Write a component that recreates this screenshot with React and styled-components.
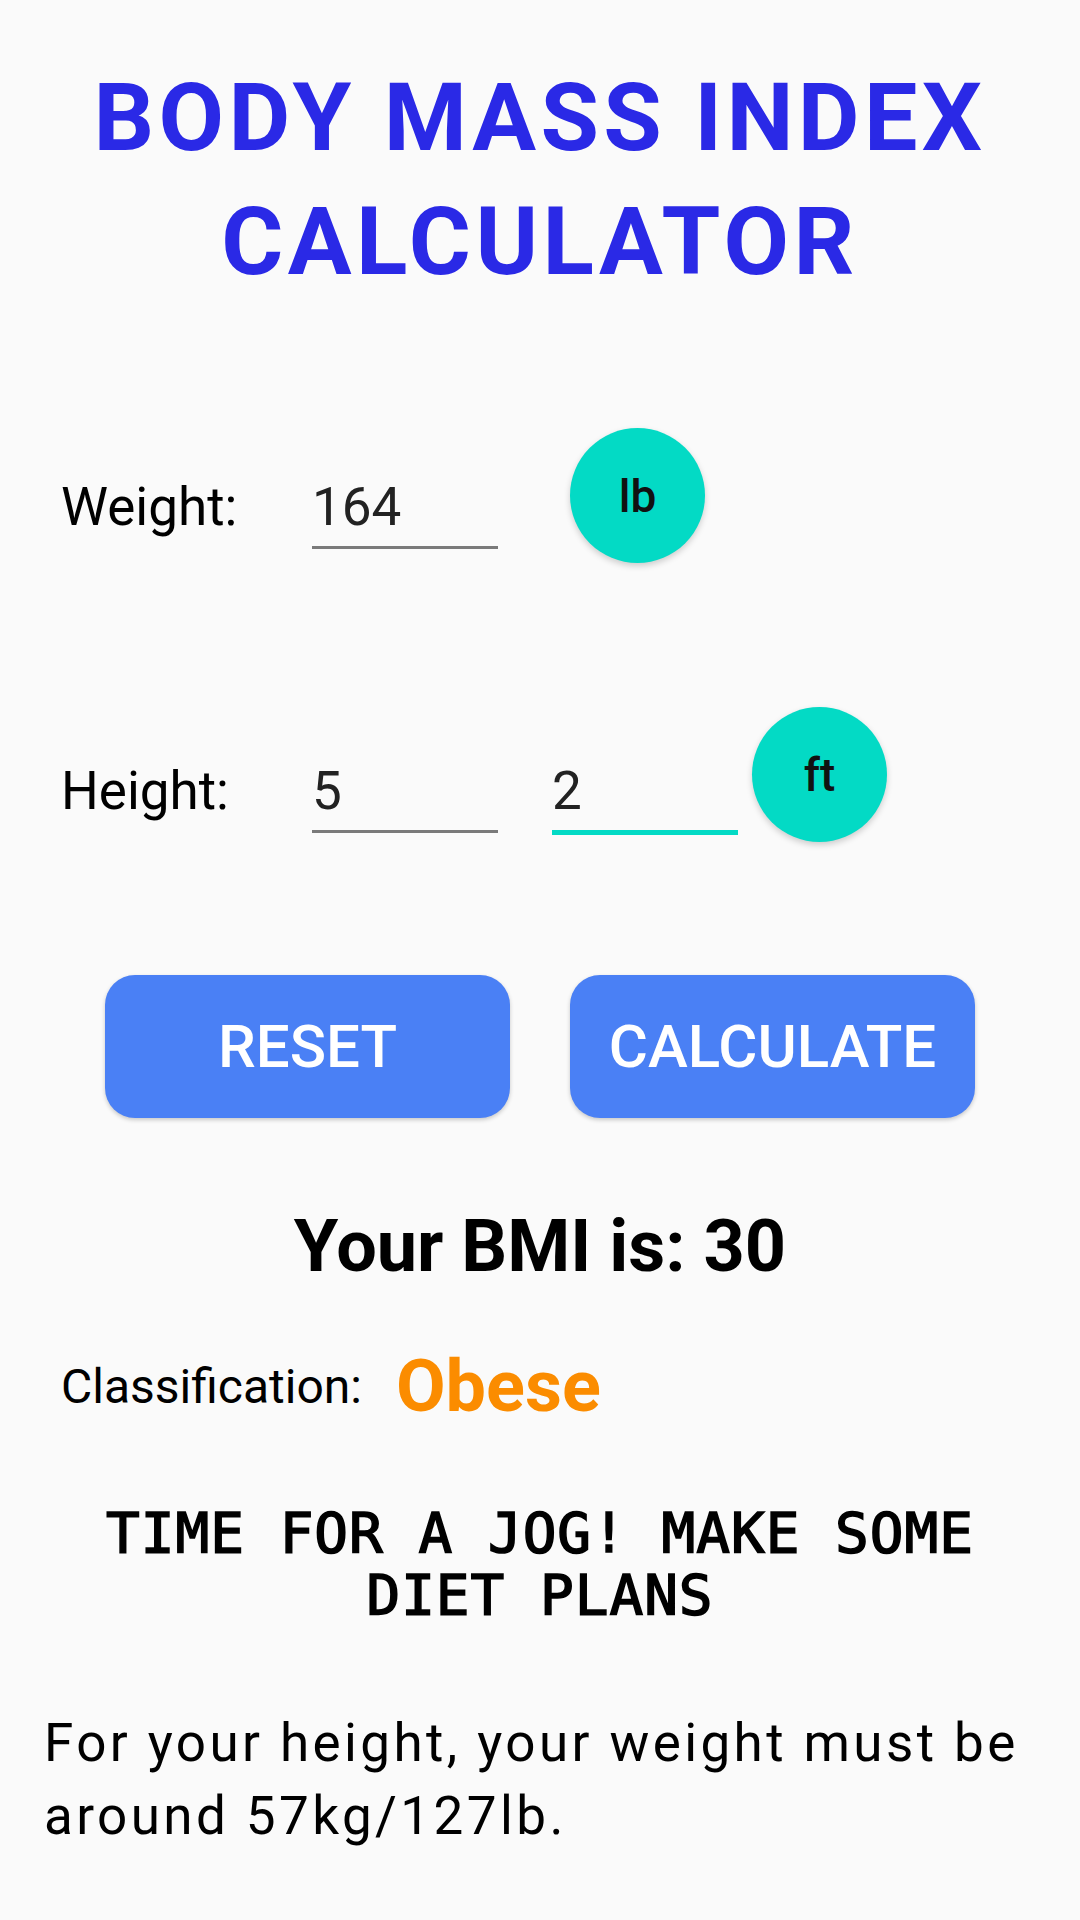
import React from "react";
import styled, { createGlobalStyle } from "styled-components";

const GlobalStyle = createGlobalStyle`
  body {
    margin: 0;
    background: #fafafa;
    font-family: Roboto, "Liberation Sans", sans-serif;
  }
`;

const BmiCalculator = () => {
  return (
    <Page>
      <GlobalStyle />
      <Title>BODY MASS INDEX CALCULATOR</Title>

      <InputRow $top={124} $fieldTop={48}>
        <Label>Weight:</Label>
        <Field>164</Field>
        <UnitButton $gap={72}>lb</UnitButton>
      </InputRow>

      <InputRow $top={144} $fieldTop={53}>
        <Label>Height:</Label>
        <Field>5</Field>
        <Field $gap={54} $focused>2</Field>
        <UnitButton $gap={14}>ft</UnitButton>
      </InputRow>

      <ButtonRow>
        <ActionButton>RESET</ActionButton>
        <ActionButton>CALCULATE</ActionButton>
      </ButtonRow>

      <Result>Your BMI is: 30</Result>

      <ClassRow>
        <ClassLabel>Classification:</ClassLabel>
        <ClassValue>Obese</ClassValue>
      </ClassRow>

      <Advice>TIME FOR A JOG! MAKE SOME DIET PLANS</Advice>

      <Note>For your height, your weight must be around 57kg/127lb.</Note>
    </Page>
  );
};

const Page = styled.div`
  width: 1080px;
  min-height: 1920px;
  background: #fafafa;
  display: flex;
  flex-direction: column;
`;

const Title = styled.h1`
  margin: 0;
  padding: 56px 40px 0;
  font-size: 95px;
  line-height: 124px;
  font-weight: 700;
  letter-spacing: 4.4px;
  color: #2a29e6;
  text-align: center;
`;

const InputRow = styled.div`
  display: flex;
  align-items: flex-start;
  margin-top: ${(p) => p.$top}px;
  padding-left: 61px;
  --field-top: ${(p) => p.$fieldTop}px;
`;

const Label = styled.div`
  width: 251px;
  margin-top: var(--field-top);
  font-size: 53px;
  line-height: 62px;
  color: #000;
`;

const Field = styled.div`
  box-sizing: border-box;
  width: 186px;
  margin-top: var(--field-top);
  margin-left: ${(p) => p.$gap || 0}px;
  padding-bottom: 8px;
  font-size: 53px;
  line-height: 62px;
  color: #222;
  border-bottom: ${(p) => (p.$focused ? "5px solid #03dac5" : "3px solid #7a7a7a")};
`;

const UnitButton = styled.div`
  width: 135px;
  height: 135px;
  margin-left: ${(p) => p.$gap}px;
  border-radius: 50%;
  background: #03dac5;
  box-shadow: 0 3px 6px rgba(0, 0, 0, 0.18);
  display: flex;
  align-items: center;
  justify-content: center;
  font-size: 46px;
  font-weight: 500;
  color: #111;
`;

const ButtonRow = styled.div`
  display: flex;
  justify-content: center;
  gap: 60px;
  margin-top: 133px;
`;

const ActionButton = styled.div`
  width: 405px;
  height: 143px;
  border-radius: 30px;
  background: #4a80f5;
  box-shadow: 0 2px 4px rgba(0, 0, 0, 0.2);
  display: flex;
  align-items: center;
  justify-content: center;
  font-size: 60px;
  font-weight: 500;
  color: #fff;
`;

const Result = styled.div`
  margin-top: 85px;
  font-size: 72px;
  line-height: 88px;
  font-weight: 700;
  color: #000;
  text-align: center;
`;

const ClassRow = styled.div`
  display: flex;
  align-items: center;
  gap: 34px;
  margin-top: 53px;
  padding-left: 61px;
`;

const ClassLabel = styled.div`
  font-size: 48px;
  line-height: 54px;
  color: #000;
`;

const ClassValue = styled.div`
  font-size: 72px;
  line-height: 86px;
  font-weight: 700;
  color: #fb8c00;
`;

const Advice = styled.div`
  margin-top: 72px;
  padding: 0 40px;
  font-family: "DejaVu Sans Mono", "Liberation Mono", monospace;
  font-size: 56px;
  line-height: 62px;
  letter-spacing: 1px;
  -webkit-text-stroke: 1.6px #000;
  color: #000;
  text-align: center;
`;

const Note = styled.div`
  margin-top: 81px;
  padding: 0 40px 0 44px;
  font-size: 53px;
  line-height: 73px;
  letter-spacing: 3.4px;
  color: #000;
`;

export default BmiCalculator;
